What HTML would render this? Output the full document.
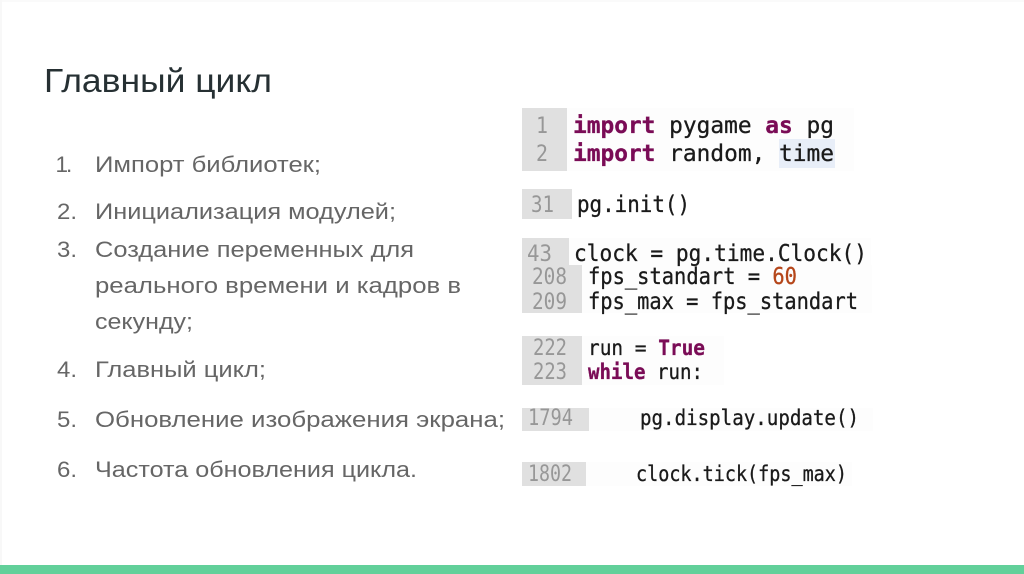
<!DOCTYPE html>
<html lang="ru">
<head>
<meta charset="utf-8">
<title>Главный цикл</title>
<style>
html,body{margin:0;padding:0;background:#fff;width:1024px;height:574px;overflow:hidden}
svg{display:block}
.t{font-family:"Liberation Sans",sans-serif;fill:#263033;font-size:33px}
.l{font-family:"Liberation Sans",sans-serif;fill:#666;font-size:22.5px}
.c{font-family:"DejaVu Sans Mono","Liberation Mono",monospace;fill:#1a1a1a;font-size:23px;stroke:#1a1a1a;stroke-width:.3px}
.s{font-size:21px}
.n{font-family:"DejaVu Sans Mono","Liberation Mono",monospace;fill:#979797;font-size:22px}
.k{fill:#7a0c56;stroke:#7a0c56;font-weight:bold}
</style>
</head>
<body>
<svg width="1024" height="574" viewBox="0 0 1024 574" xmlns="http://www.w3.org/2000/svg">
<rect width="1024" height="574" fill="#fff"/>
<rect x="0" y="0" width="1024" height="2" fill="#fafafa"/>
<rect x="0" y="0" width="2" height="565" fill="#f8f8f8"/>
<rect x="0" y="565" width="1024" height="9" fill="#62d09a"/>

<text class="t" x="44" y="92" textLength="228" lengthAdjust="spacingAndGlyphs">Главный цикл</text>

<text class="l" x="55.5" y="172">1</text>
<text class="l" x="66" y="172">.</text>
<text class="l" x="57" y="219" textLength="20" lengthAdjust="spacingAndGlyphs">2.</text>
<text class="l" x="57" y="257" textLength="20" lengthAdjust="spacingAndGlyphs">3.</text>
<text class="l" x="57" y="377" textLength="20" lengthAdjust="spacingAndGlyphs">4.</text>
<text class="l" x="57" y="427" textLength="20" lengthAdjust="spacingAndGlyphs">5.</text>
<text class="l" x="57" y="477" textLength="20" lengthAdjust="spacingAndGlyphs">6.</text>

<text class="l" x="95" y="172" textLength="226" lengthAdjust="spacingAndGlyphs">Импорт библиотек;</text>
<text class="l" x="95" y="219" textLength="301" lengthAdjust="spacingAndGlyphs">Инициализация модулей;</text>
<text class="l" x="95" y="257" textLength="319" lengthAdjust="spacingAndGlyphs">Создание переменных для</text>
<text class="l" x="95" y="293" textLength="366" lengthAdjust="spacingAndGlyphs">реального времени и кадров в</text>
<text class="l" x="95" y="329" textLength="98" lengthAdjust="spacingAndGlyphs">секунду;</text>
<text class="l" x="95" y="377" textLength="171" lengthAdjust="spacingAndGlyphs">Главный цикл;</text>
<text class="l" x="95" y="427" textLength="410" lengthAdjust="spacingAndGlyphs">Обновление изображения экрана;</text>
<text class="l" x="95" y="477" textLength="322" lengthAdjust="spacingAndGlyphs">Частота обновления цикла.</text>

<!-- code block 1 -->
<rect x="566" y="108" width="288" height="63" fill="#fdfdfd"/>
<rect x="522" y="108" width="45" height="63" fill="#e0e0e0"/>
<rect x="779" y="139" width="56" height="29" fill="#e8eef8"/>
<text class="n" x="536" y="133" textLength="12" lengthAdjust="spacingAndGlyphs">1</text>
<text class="n" x="536" y="161" textLength="12" lengthAdjust="spacingAndGlyphs">2</text>
<text class="c" x="573" y="133" textLength="261" lengthAdjust="spacingAndGlyphs"><tspan class="k">import</tspan> pygame <tspan class="k">as</tspan> pg</text>
<text class="c" x="573" y="161" textLength="261" lengthAdjust="spacingAndGlyphs"><tspan class="k">import</tspan> random, time</text>

<!-- code block 2 -->
<rect x="522" y="189" width="50" height="30" fill="#e0e0e0"/>
<text class="n" x="531" y="212" textLength="23" lengthAdjust="spacingAndGlyphs">31</text>
<text class="c" x="577" y="212" textLength="113" lengthAdjust="spacingAndGlyphs">pg.init()</text>

<!-- code block 3 -->
<rect x="569" y="238" width="302" height="27" fill="#fdfdfd"/>
<rect x="582" y="265" width="290" height="48" fill="#fdfdfd"/>
<rect x="522" y="238" width="47" height="27" fill="#e0e0e0"/>
<rect x="522" y="265" width="60" height="48" fill="#e0e0e0"/>
<text class="n" x="527" y="261" textLength="25" lengthAdjust="spacingAndGlyphs">43</text>
<text class="c" x="574" y="261" textLength="293" lengthAdjust="spacingAndGlyphs">clock = pg.time.Clock()</text>
<text class="n" x="532" y="284" textLength="35" lengthAdjust="spacingAndGlyphs">208</text>
<text class="c" x="588" y="284" textLength="209" lengthAdjust="spacingAndGlyphs">fps_standart = <tspan fill="#b5461a" stroke="#b5461a">60</tspan></text>
<text class="n" x="532" y="309" textLength="35" lengthAdjust="spacingAndGlyphs">209</text>
<text class="c" x="588" y="309" textLength="270" lengthAdjust="spacingAndGlyphs">fps_max = fps_standart</text>

<!-- code block 4 -->
<rect x="582" y="336" width="142" height="49" fill="#fdfdfd"/>
<rect x="522" y="336" width="60" height="49" fill="#e0e0e0"/>
<text class="n" x="533" y="355" textLength="34" lengthAdjust="spacingAndGlyphs">222</text>
<text class="c s" x="588" y="355" textLength="117" lengthAdjust="spacingAndGlyphs">run = <tspan class="k">True</tspan></text>
<text class="n" x="533" y="379" textLength="34" lengthAdjust="spacingAndGlyphs">223</text>
<text class="c s" x="588" y="379" textLength="115" lengthAdjust="spacingAndGlyphs"><tspan class="k">while</tspan> run:</text>

<!-- code block 5 -->
<rect x="589" y="408" width="284" height="23" fill="#fdfdfd"/>
<rect x="522" y="408" width="67" height="23" fill="#e0e0e0"/>
<text class="n" x="528" y="425" textLength="45" lengthAdjust="spacingAndGlyphs">1794</text>
<text class="c s" x="640" y="425" textLength="219" lengthAdjust="spacingAndGlyphs">pg.display.update()</text>

<!-- code block 6 -->
<rect x="586" y="462" width="266" height="24" fill="#fdfdfd"/>
<rect x="522" y="462" width="64" height="24" fill="#e0e0e0"/>
<text class="n" x="528" y="481" textLength="44" lengthAdjust="spacingAndGlyphs">1802</text>
<text class="c s" x="636" y="481" textLength="211" lengthAdjust="spacingAndGlyphs">clock.tick(fps_max)</text>
</svg>
</body>
</html>
